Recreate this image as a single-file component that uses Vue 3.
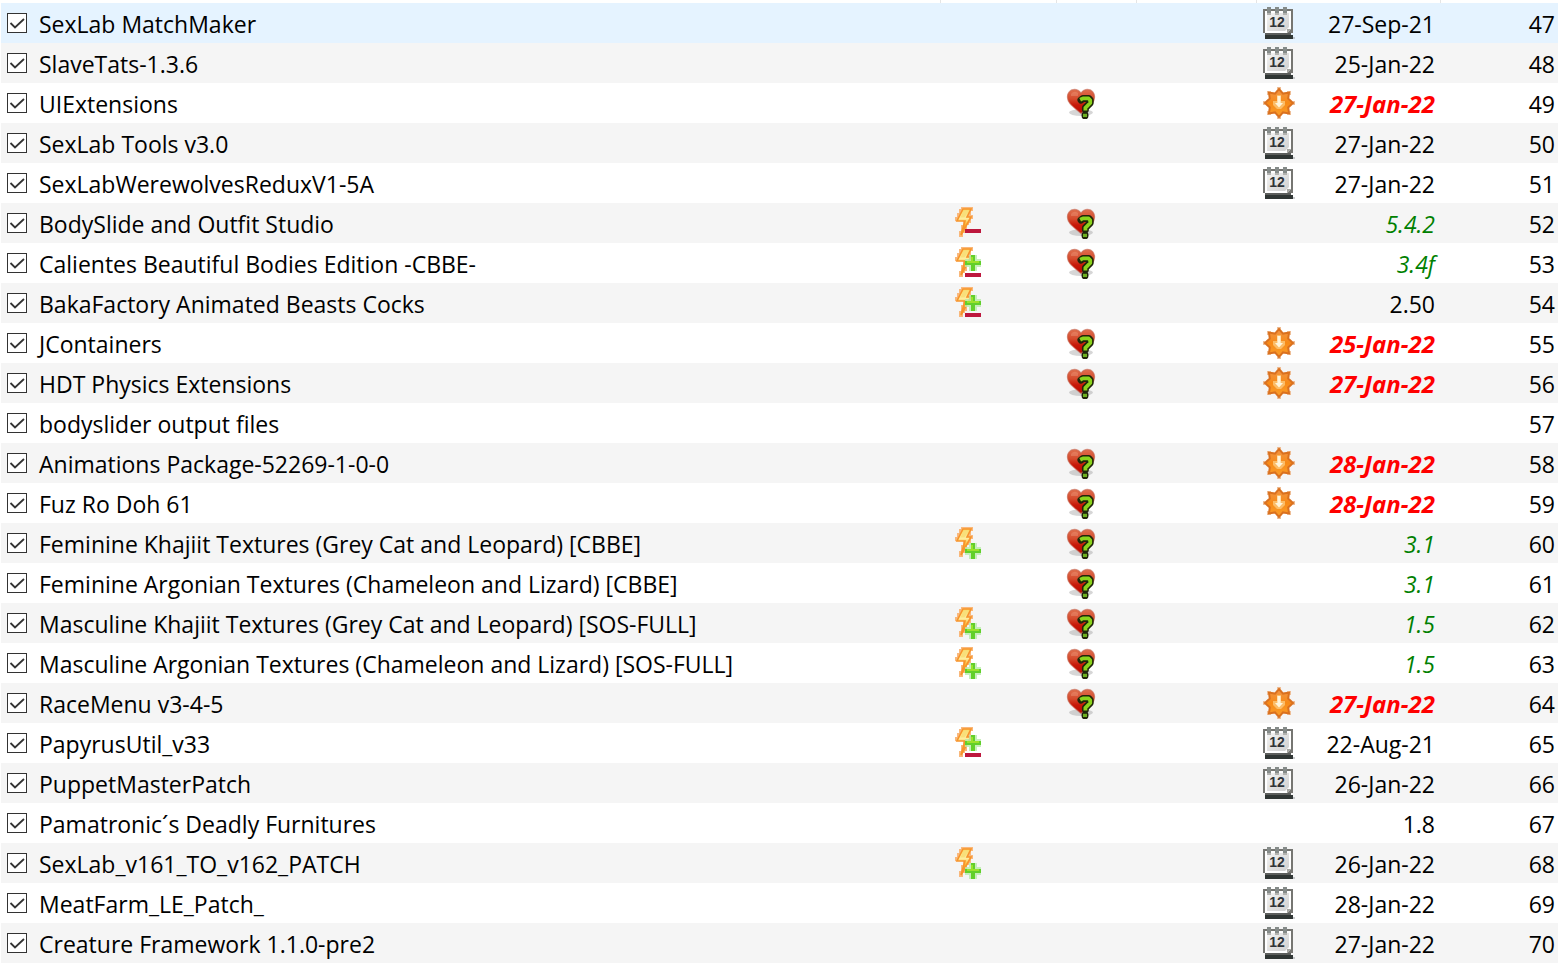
<script setup>
import { ref } from 'vue'

const createMod = (priority, name, version = '', options = {}) => ({
  priority,
  name,
  version,
  enabled: true,
  conflict: options.conflict || '',
  unendorsed: options.unendorsed || false,
  status: options.status || '',
  icon: options.icon || ''
})

const dated = { icon: 'calendar' }
const outdated = { icon: 'update', status: 'outdated', unendorsed: true }
const current = { status: 'current', unendorsed: true }

const selected = ref(47)

const mods = ref([
  createMod(47, 'SexLab MatchMaker', '27-Sep-21', dated),
  createMod(48, 'SlaveTats-1.3.6', '25-Jan-22', dated),
  createMod(49, 'UIExtensions', '27-Jan-22', outdated),
  createMod(50, 'SexLab Tools v3.0', '27-Jan-22', dated),
  createMod(51, 'SexLabWerewolvesReduxV1-5A', '27-Jan-22', dated),
  createMod(52, 'BodySlide and Outfit Studio', '5.4.2', { ...current, conflict: 'overwritten' }),
  createMod(53, 'Calientes Beautiful Bodies Edition -CBBE-', '3.4f', { ...current, conflict: 'mixed' }),
  createMod(54, 'BakaFactory Animated Beasts Cocks', '2.50', { conflict: 'mixed' }),
  createMod(55, 'JContainers', '25-Jan-22', outdated),
  createMod(56, 'HDT Physics Extensions', '27-Jan-22', outdated),
  createMod(57, 'bodyslider output files'),
  createMod(58, 'Animations Package-52269-1-0-0', '28-Jan-22', outdated),
  createMod(59, 'Fuz Ro Doh 61', '28-Jan-22', outdated),
  createMod(60, 'Feminine Khajiit Textures (Grey Cat and Leopard) [CBBE]', '3.1', { ...current, conflict: 'overwrites' }),
  createMod(61, 'Feminine Argonian Textures (Chameleon and Lizard) [CBBE]', '3.1', current),
  createMod(62, 'Masculine Khajiit Textures (Grey Cat and Leopard) [SOS-FULL]', '1.5', { ...current, conflict: 'overwrites' }),
  createMod(63, 'Masculine Argonian Textures (Chameleon and Lizard) [SOS-FULL]', '1.5', { ...current, conflict: 'overwrites' }),
  createMod(64, 'RaceMenu v3-4-5', '27-Jan-22', outdated),
  createMod(65, 'PapyrusUtil_v33', '22-Aug-21', { ...dated, conflict: 'mixed' }),
  createMod(66, 'PuppetMasterPatch', '26-Jan-22', dated),
  createMod(67, 'Pamatronic´s Deadly Furnitures', '1.8'),
  createMod(68, 'SexLab_v161_TO_v162_PATCH', '26-Jan-22', { ...dated, conflict: 'overwrites' }),
  createMod(69, 'MeatFarm_LE_Patch_', '28-Jan-22', dated),
  createMod(70, 'Creature Framework 1.1.0-pre2', '27-Jan-22', dated)
])
</script>

<template>
  <!-- shared gradients and symbols -->
  <svg class="sprite" aria-hidden="true">
    <defs>
      <linearGradient id="bolt-fill" x1="0" y1="0" x2="0" y2="1">
        <stop offset="0" stop-color="#fbd75c" />
        <stop offset="0.35" stop-color="#fdf0a4" />
        <stop offset="0.6" stop-color="#fdb52e" />
        <stop offset="1" stop-color="#f58410" />
      </linearGradient>
      <linearGradient id="heart-fill" x1="0" y1="0" x2="0" y2="1">
        <stop offset="0" stop-color="#e0714f" />
        <stop offset="0.4" stop-color="#d4492c" />
        <stop offset="0.65" stop-color="#c81808" />
        <stop offset="1" stop-color="#b80e04" />
      </linearGradient>
      <linearGradient id="page-fill" x1="0" y1="0" x2="1" y2="1">
        <stop offset="0" stop-color="#f4f4f4" />
        <stop offset="1" stop-color="#cfcfcf" />
      </linearGradient>
      <linearGradient id="star-fill" x1="0" y1="0" x2="0" y2="1">
        <stop offset="0" stop-color="#f0964a" />
        <stop offset="0.5" stop-color="#f78a17" />
        <stop offset="1" stop-color="#fba12c" />
      </linearGradient>
    </defs>
    <symbol id="bolt" viewBox="0 0 16 16">
      <path d="M6 0h6v2h-1v2h1v2h-1v2h-1v1h-1v3h-1v1h-1v2h-2v-3h1v-3h1v-2h-4v-2h1v-2h1v-2h1z" fill="#f9b87b" />
      <path d="M7 1h4l-2 4h2l-5 9l2-7h-4z" fill="url(#bolt-fill)" stroke="#f7942b" stroke-width=".8" />
      <path d="M7.5 1.7h2.3l-2 3.5h-2.2z" fill="#f8df7a" />
    </symbol>
    <symbol id="plus" viewBox="0 0 8 8">
      <path d="M2 0h4v2h2v4h-2v2h-4v-2h-2v-4h2z" fill="#b8ebaa" fill-opacity=".8" />
      <path d="M3 0h2v3h3v2h-3v3h-2v-3h-3v-2h3z" fill="#62cf2c" />
      <path d="M3 1h1v2h3v1h-6v-1h2z" fill="#9be22c" />
    </symbol>
    <symbol id="heart" viewBox="0 0 16 16">
      <ellipse cx="8" cy="12.8" rx="6" ry="1.7" fill="#777" fill-opacity=".3" />
      <path d="M8 3C7 1.6 6 1.2 4.8 1.2C2.6 1.2 1.2 2.8 1.2 5C1.2 8.2 4.6 10.2 8 13.2C11.4 10.2 14.8 8.2 14.8 5C14.8 2.8 13.4 1.2 11.2 1.2C10 1.2 9 1.6 8 3z" fill="url(#heart-fill)" stroke="#c5634f" stroke-opacity=".6" stroke-width=".6" />
      <path d="M3 3.5q1.5-2 3.5-.5v1.5h-3.5z" fill="#f0a288" fill-opacity=".35" />
      <path d="M8 6.5L9 5.7H11.8L12.6 6.6V8L10.2 10.4V11.3M10 14v.4" fill="none" stroke="#20260a" stroke-width="3.5" stroke-linejoin="round" stroke-linecap="round" />
      <path d="M7.6 6.4L9 5.7H11.8L12.6 6.6V8L10.2 10.4V11.8" fill="none" stroke="#8ad31d" stroke-width="1.9" stroke-linejoin="round" />
      <path d="M9 13.4h2v1.6h-2z" fill="#6fb01f" />
    </symbol>
    <symbol id="calendar" viewBox="0 0 16 16">
      <path d="M1 15h15v1h-15z" fill="#8b9297" fill-opacity=".45" />
      <path d="M0 1h15v12h-1v2h-13v-2h-1z" fill="#767672" />
      <path d="M1 13h13v1h-13z" fill="#5c5e5c" />
      <path d="M1 14h14v2h-14z" fill="#303634" />
      <path d="M1 2h13v9l-2 2h-11z" fill="#fff" />
      <path d="M2 3h11v7l-2 2h-9z" fill="url(#page-fill)" />
      <path d="M12 13v-2h2z" fill="#a4a4a0" />
      <path d="M2 0h2v3h-2zM6 0h2v3h-2zM10 0h2v3h-2z" fill="#858b89" />
      <path d="M2 3h2v1h-2zM6 3h2v1h-2zM10 3h2v1h-2z" fill="#b3b3b0" />
    </symbol>
    <symbol id="update" viewBox="0 0 16 16">
      <path d="M7 0h2v1h-2zM7 15h2v1h-2zM0 7h1v2h-1zM15 7h1v2h-1zM2 2h2v2h-2zM12 2h2v2h-2zM2 12h2v2h-2zM12 12h2v2h-2z" fill="#efc09a" />
      <path d="M8 1l2 2.3l3-.5l-.4 3l2.4 2.2l-2.4 2.2l.4 3l-3-.5l-2 2.3l-2-2.3l-3 .5l.4-3l-2.4-2.2l2.4-2.2l-.4-3l3 .5z" fill="url(#star-fill)" stroke="#da711f" stroke-width="1" />
      <path d="M7 4h2v3h2v2l-2 2h-2l-2-2v-2h2z" fill="#fbbd68" />
      <path d="M7.2 4.5h1.6v3.5h1.2l-2 2.2l-2-2.2h1.2z" fill="#fff4da" />
    </symbol>
  </svg>

  <table class="mod-list">
    <colgroup>
      <col />
      <col class="col-conflict" />
      <col class="col-flag" />
      <col class="col-category" />
      <col class="col-version" />
      <col class="col-priority" />
    </colgroup>
    <thead aria-hidden="true">
      <tr>
        <td v-for="n in 6" :key="n"></td>
      </tr>
    </thead>
    <tbody>
      <tr
        v-for="mod in mods"
        :key="mod.priority"
        :class="{ selected: mod.priority === selected }"
        @click="selected = mod.priority"
      >
        <td>
          <label class="mod-name">
            <input v-model="mod.enabled" type="checkbox" />
            <span>{{ mod.name }}</span>
          </label>
        </td>
        <td class="flag">
          <svg v-if="mod.conflict" class="icon" viewBox="0 0 16 16">
            <use href="#bolt" width="16" height="16" />
            <use v-if="mod.conflict === 'mixed'" href="#plus" x="8" y="4" width="8" height="8" />
            <use v-if="mod.conflict === 'overwrites'" href="#plus" x="8" y="8" width="8" height="8" />
            <rect v-if="mod.conflict === 'mixed'" x="8" y="13" width="8" height="2" fill="#bd173d" />
            <rect v-if="mod.conflict === 'overwritten'" x="8" y="11" width="8" height="2" fill="#bd173d" />
          </svg>
        </td>
        <td class="flag">
          <svg v-if="mod.unendorsed" class="icon" viewBox="0 0 16 16">
            <use href="#heart" width="16" height="16" />
          </svg>
        </td>
        <td></td>
        <td>
          <div class="version" :class="mod.status">
            <svg v-if="mod.icon" class="icon" viewBox="0 0 16 16">
              <use :href="'#' + mod.icon" width="16" height="16" />
              <text v-if="mod.icon === 'calendar'" x="7" y="10" text-anchor="middle" class="calendar-day">12</text>
            </svg>
            <span class="version-text">{{ mod.version }}</span>
          </div>
        </td>
        <td class="priority">{{ mod.priority }}</td>
      </tr>
    </tbody>
  </table>
</template>

<style>
body {
  margin: 0;
  background: #fff;
}
</style>

<style scoped>
.sprite {
  position: absolute;
  width: 0;
  height: 0;
}

.calendar-day {
  font: bold 7px "Liberation Sans", sans-serif;
  fill: #303438;
}

.mod-list {
  width: calc(100% - 1px);
  margin-left: 1px;
  table-layout: fixed;
  border-collapse: separate;
  border-spacing: 0;
  font-family: "Segoe UI", "Open Sans", sans-serif;
  font-size: 23px;
  line-height: 32px;
  color: #000;
}

.col-conflict {
  width: 116px;
}

.col-flag {
  width: 80px;
}

.col-category {
  width: 120px;
}

.col-version {
  width: 184px;
}

.col-priority {
  width: 117px;
}

td {
  padding: 0;
}

thead td {
  height: 3px;
  box-sizing: border-box;
  border-right: 1px solid #e5e5e5;
}

thead td:last-child {
  border-right: none;
}

tbody tr {
  height: 40px;
}

tbody tr:nth-child(even) {
  background: #f5f5f5;
}

tbody tr.selected {
  background: #e5f3ff;
}

.mod-name {
  display: flex;
  align-items: center;
  gap: 12px;
  padding-left: 6px;
  white-space: nowrap;
}

.mod-name span,
.version-text,
.priority {
  padding-top: 2px;
}

input {
  appearance: none;
  flex: none;
  width: 20px;
  height: 20px;
  margin: 0;
  border: 1px solid #333;
  background: #fff;
}

input:checked {
  background: #fff url("data:image/svg+xml,%3Csvg xmlns='http://www.w3.org/2000/svg' viewBox='0 0 18 18'%3E%3Cpath d='M2.5 9l4.5 4.5l9-8.5' fill='none' stroke='%23333' stroke-width='1.8'/%3E%3C/svg%3E") center / 18px 18px no-repeat;
}

.icon {
  display: block;
  flex: none;
  width: 32px;
  height: 32px;
}

.flag {
  padding-left: 8px;
}

.version {
  display: flex;
  align-items: center;
  padding: 0 6px;
}

.version-text {
  flex: 1;
  text-align: right;
}

.current {
  color: #008000;
  font-style: italic;
}

.outdated {
  color: #f00;
  font-family: "Segoe UI", "Noto Sans", sans-serif;
  font-size: 24px;
  font-style: italic;
  font-weight: bold;
}

.priority {
  padding-right: 3px;
  text-align: right;
}
</style>
